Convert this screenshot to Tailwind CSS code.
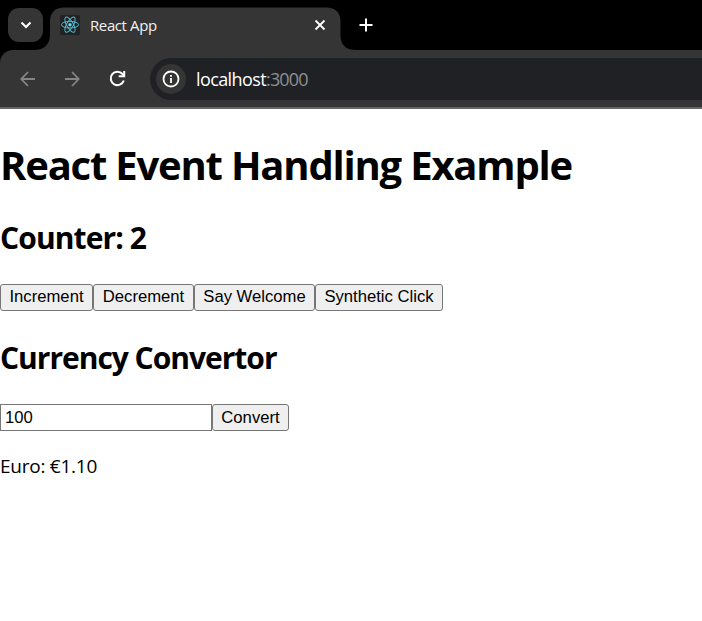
<!DOCTYPE html>
<html lang="en">
<head>
<meta charset="utf-8">
<title>React App</title>
<script src="https://cdn.jsdelivr.net/npm/@tailwindcss/browser@4"></script>
</head>
<body class="h-[621px] overflow-hidden bg-white text-black font-['Open_Sans','Noto_Sans',sans-serif]">
<header class="h-[109px] bg-black">
  <div class="relative flex h-[50px]">
    <svg class="absolute left-0 top-0" width="370" height="50" viewBox="0 0 370 50" fill="#353535"><path d="M35 50Q50 49 50 34V22Q50 7.500 64.500 7.500H326Q340.500 7.500 340.500 22V35Q340.500 50 356 50Z"/></svg>
    <button class="relative ml-2 mt-2 flex h-[34px] w-[35px] items-center justify-center rounded-[11px] bg-[#353535]" aria-label="Search tabs">
      <svg width="12" height="8" viewBox="0 0 12 8" fill="none" stroke="#fff" stroke-width="2"><path d="M1.500 1.500 6 6l4.500-4.500"/></svg>
    </button>
    <div class="relative ml-[17px] mt-[6px] flex h-[37px] w-[266px] items-center">
      <svg class="mt-px" width="20" height="20" viewBox="0 0 20 20"><rect width="20" height="20" rx="1.500" fill="#222"/><g fill="none" stroke="#53b6d1" stroke-width="1"><ellipse cx="10" cy="9.700" rx="8.600" ry="3.300"/><ellipse cx="10" cy="9.700" rx="8.600" ry="3.300" transform="rotate(60 10 9.700)"/><ellipse cx="10" cy="9.700" rx="8.600" ry="3.300" transform="rotate(120 10 9.700)"/></g><circle cx="10" cy="9.700" r="1.700" fill="#61dafb"/></svg>
      <span class="ml-[10px] whitespace-nowrap text-[15px] leading-5 tracking-[-0.4px] text-[#f1f1f1]">React App</span>
      <svg class="ml-auto" width="12" height="12" viewBox="0 0 12 12" stroke="#fff" stroke-width="1.800"><path d="m1.500 1.500 9 9m0-9-9 9"/></svg>
    </div>
    <svg class="ml-[33px] mt-[18px]" width="14" height="14" viewBox="0 0 14 14" stroke="#fff" stroke-width="2"><path d="M7 .500v13M.500 7h13"/></svg>
  </div>
  <div class="flex h-[59px] items-center rounded-tl-[13px] border-b-2 border-[#666] bg-[#353535]">
    <svg class="ml-5" width="16" height="16" viewBox="0 0 16 16" fill="none" stroke="#858585" stroke-width="1.800"><path d="M15 8H1.700M8 1 1.300 8 8 15"/></svg>
    <svg class="ml-[28px]" width="16" height="16" viewBox="0 0 16 16" fill="none" stroke="#858585" stroke-width="1.800"><path d="M1 8h13.300M8 1l6.700 7L8 15"/></svg>
    <svg class="ml-[29px]" width="17" height="17" viewBox="0 0 17 17" fill="none" stroke="#fff" stroke-width="2"><path d="M14.800 10.500A6.700 6.700 0 1 1 13.500 4l1.500 1.700"/><path d="M15.200 1v5.200H9.700"/></svg>
    <div class="ml-6 flex h-[42px] flex-1 items-center rounded-l-full bg-[#202124] pl-[6px]">
      <span class="flex size-[30px] items-center justify-center rounded-full bg-[#353535]"><svg width="18" height="18" viewBox="0 0 18 18" fill="none" stroke="#fff" stroke-width="1.800"><circle cx="9" cy="9" r="7.500"/><path d="M9 8v5M9 5v1.700"/></svg></span>
      <span class="ml-[10px] whitespace-nowrap text-[18px] leading-6 tracking-[-0.6px] text-white">localhost<span class="tracking-[-0.85px] text-[#8c9095]">:3000</span></span>
    </div>
  </div>
</header>
<main>
  <h1 class="mt-[29px] whitespace-nowrap text-[40px] font-bold leading-[53px] tracking-[-1.2px]">React Event Handling Example</h1>
  <h2 class="mt-[27px] whitespace-nowrap text-[30px] font-bold leading-[40px] tracking-[-0.9px]">Counter: 2</h2>
  <div class="mt-[26px] flex h-[27px] font-['Liberation_Sans',Arial,sans-serif] text-[16.667px] leading-[19px]">
    <button class="w-[93px] whitespace-nowrap rounded-[3px] border border-[#767676] bg-[#efefef] pb-[3px]">Increment</button>
    <button class="w-[101px] whitespace-nowrap rounded-[3px] border border-[#767676] bg-[#efefef] pb-[3px]">Decrement</button>
    <button class="w-[121px] whitespace-nowrap rounded-[3px] border border-[#767676] bg-[#efefef] pb-[3px]">Say Welcome</button>
    <button class="w-[128px] whitespace-nowrap rounded-[3px] border border-[#767676] bg-[#efefef] pb-[3px]">Synthetic Click</button>
  </div>
  <h2 class="mt-[27px] whitespace-nowrap text-[30px] font-bold leading-[40px] tracking-[-1.02px]">Currency Convertor</h2>
  <div class="mt-[26px] flex h-[27px] font-['Liberation_Sans',Arial,sans-serif] text-[16.667px] leading-[19px]">
    <input class="w-[212px] border border-[#767676] bg-white px-1" value="100">
    <button class="w-[77px] whitespace-nowrap rounded-[3px] border border-[#767676] bg-[#efefef]">Convert</button>
  </div>
  <p class="mt-[22px] whitespace-nowrap text-[19px] leading-[27px] tracking-[-0.25px]">Euro: €1.10</p>
</main>
</body>
</html>
